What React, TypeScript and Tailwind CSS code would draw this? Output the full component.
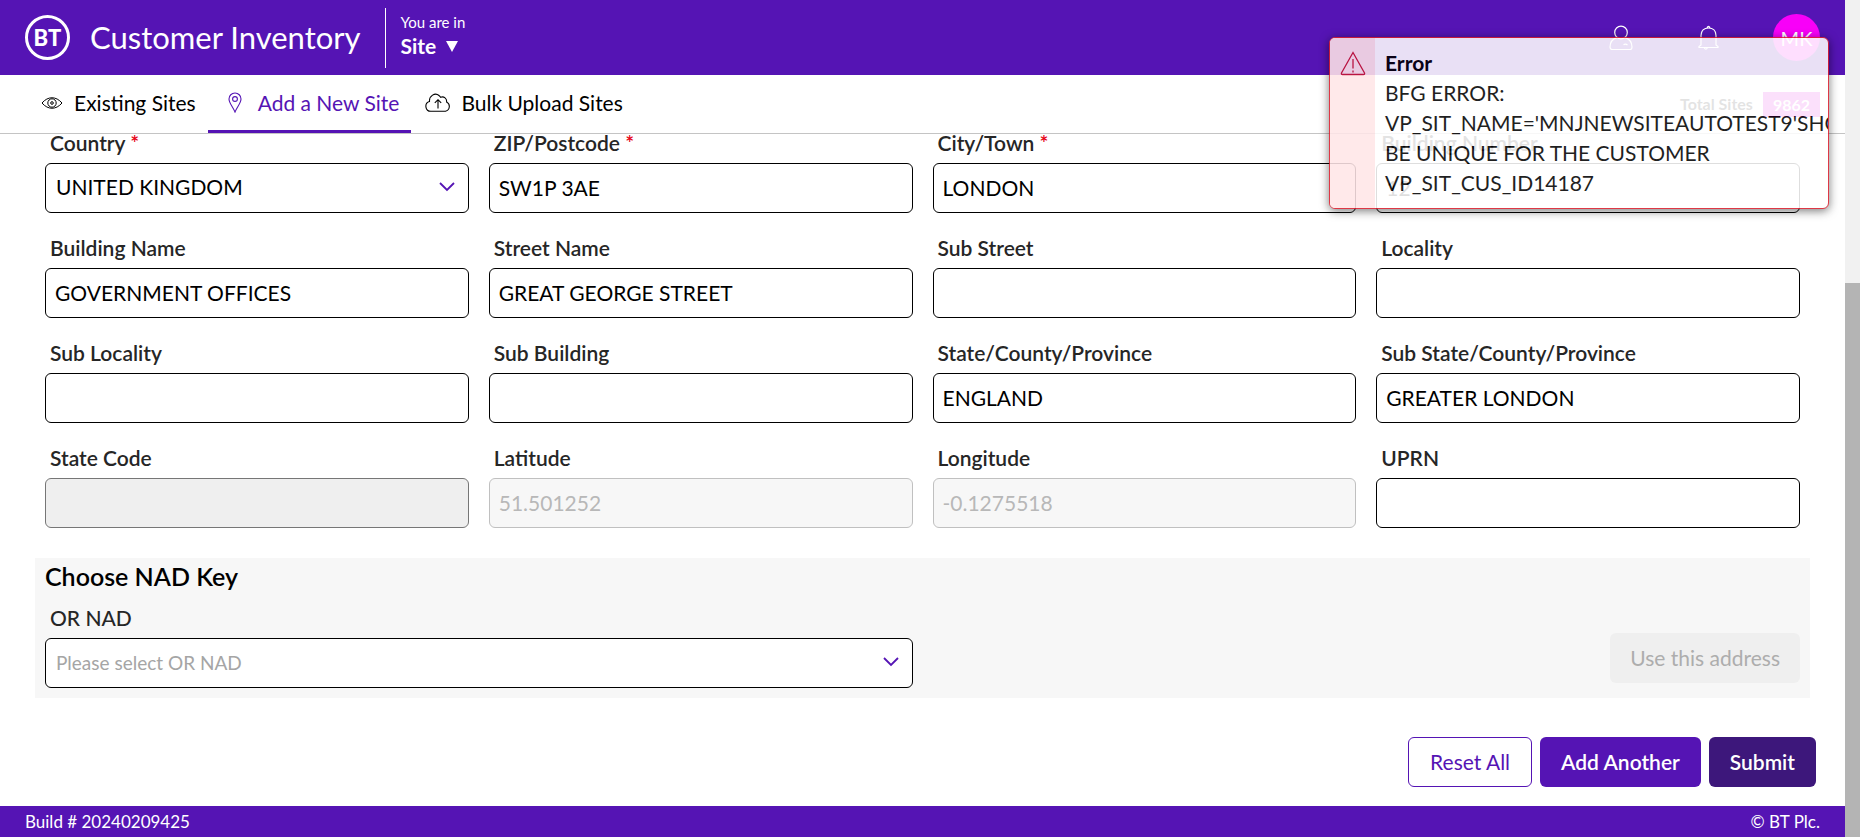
import React, { useId } from "react";

type FieldProps = {
  label: string;
  value?: string;
  required?: boolean;
  kind?: "text" | "select";
  tone?: "normal" | "locked" | "muted";
};

const tones = {
  normal: "border-black bg-white text-black",
  locked: "border-[#767676] bg-[#efefef] text-black",
  muted: "border-[#c0c0c0] bg-[#f7f7f7] text-[#b8b8b8]",
};

const fields: FieldProps[] = [
  { label: "Country", value: "UNITED KINGDOM", required: true, kind: "select" },
  { label: "ZIP/Postcode", value: "SW1P 3AE", required: true },
  { label: "City/Town", value: "LONDON", required: true },
  { label: "Building Number", value: "12" },
  { label: "Building Name", value: "GOVERNMENT OFFICES" },
  { label: "Street Name", value: "GREAT GEORGE STREET" },
  { label: "Sub Street" },
  { label: "Locality" },
  { label: "Sub Locality" },
  { label: "Sub Building" },
  { label: "State/County/Province", value: "ENGLAND" },
  { label: "Sub State/County/Province", value: "GREATER LONDON" },
  { label: "State Code", tone: "locked" },
  { label: "Latitude", value: "51.501252", tone: "muted" },
  { label: "Longitude", value: "-0.1275518", tone: "muted" },
  { label: "UPRN" },
];

function Chevron() {
  return (
    <svg viewBox="0 0 16 10" className="pointer-events-none absolute top-[19px] right-3.5 h-2.5 w-4" fill="none" stroke="#5514b4" strokeWidth="1.8">
      <path d="M1 1 8 8 15 1" />
    </svg>
  );
}

function SelectBox({ id, text, placeholder }: { id: string; text: string; placeholder?: boolean }) {
  return (
    <div className="relative">
      <select
        id={id}
        className={`h-[50px] w-full appearance-none rounded-md border border-black bg-white px-2.5 outline-none ${
          placeholder ? "text-[19px] text-[#a5a5a5]" : "pb-0.5 text-[21px] text-black"
        }`}
      >
        <option>{text}</option>
      </select>
      <Chevron />
    </div>
  );
}

function Field({ label, value = "", required, kind = "text", tone = "normal" }: FieldProps) {
  const id = useId();
  return (
    <div className="flex min-w-0 flex-col gap-3">
      <label htmlFor={id} className="pl-[5px] text-[21px] leading-[17px] font-semibold text-[#262626]">
        {label}
        {required && <span className="text-[#e60014]"> *</span>}
      </label>
      {kind === "select" ? (
        <SelectBox id={id} text={value} />
      ) : (
        <input
          id={id}
          type="text"
          defaultValue={value}
          disabled={tone !== "normal"}
          className={`h-[50px] w-full rounded-md border px-[9px] pb-0.5 text-[21px] outline-none ${tones[tone]}`}
        />
      )}
    </div>
  );
}

function Header() {
  return (
    <header className="flex h-[75px] items-center bg-[#5514b4] px-[25px] text-white">
      <div className="flex size-[45px] items-center justify-center rounded-full border-[3px] border-white text-[22px] font-black">BT</div>
      <h1 className="ml-5 text-[31px] font-normal">Customer Inventory</h1>
      <div className="ml-6 flex h-[60px] flex-col justify-center border-l border-white pb-[7px] pl-[15px]">
        <span className="text-[15px] leading-6">You are in</span>
        <button type="button" className="flex items-center gap-2.5 text-[21px] leading-6 font-bold">
          Site
          <svg viewBox="0 0 12 11" className="h-[11px] w-3" fill="currentColor">
            <path d="M0 0H12L6 11Z" />
          </svg>
        </button>
      </div>
      <div className="ml-auto flex items-center">
        <button type="button" aria-label="Profile">
          <svg viewBox="0 0 24 26" className="h-[26px] w-6" fill="none" stroke="currentColor" strokeWidth="1.2">
            <circle cx="12" cy="7.500" r="6.300" />
            <path d="M8 12.600C3.600 14 1 17.500 1 22Q1 24.500 3.500 24.500H21Q23 24.500 23 22C23 17.500 20.400 14 16 12.600M14.500 19.800Q16.500 18.500 18.500 20" />
          </svg>
        </button>
        <button type="button" aria-label="Notifications" className="ml-[65px]">
          <svg viewBox="0 0 21 26" className="h-[26px] w-[21px]" fill="none" stroke="currentColor" strokeWidth="1.2">
            <path d="M9 2.600Q10.500 0 12 2.600M3 20V10.500C3 5.500 6 3 10.500 3S18 5.500 18 10.500V20L20 21.500V22.500H1V21.500ZM6 22.500Q8 26 9.500 22.500" />
          </svg>
        </button>
        <div className="ml-[54px] flex size-[47px] items-center justify-center rounded-full bg-[#f800f8] text-xl">MK</div>
      </div>
    </header>
  );
}

function Nav() {
  return (
    <nav className="flex h-[59px] border-b border-[#c4c4c4] pl-[27px] pr-[25px] text-[21px] text-black">
      <a href="#existing" className="flex items-center gap-[11px] pr-3 pb-[3px] pl-3.5">
        <svg viewBox="0 0 22 12" className="h-3 w-[22px]" fill="none" stroke="currentColor" strokeWidth="1">
          <path d="M1 6C7-1 15-1 21 6C15 13 7 13 1 6Z" />
          <circle cx="11" cy="6" r="4.200" />
          <circle cx="11" cy="6" r="1.300" />
        </svg>
        Existing Sites
      </a>
      <a href="#add" className="flex items-center gap-4 border-b-[3px] border-[#5514b4] pr-3 pl-5 text-[#5514b4]">
        <svg viewBox="0 0 14 21" className="h-[21px] w-3.5" fill="none" stroke="currentColor" strokeWidth="1.1">
          <path d="M7 20C5 15 1 11 1 7A6 6 0 0 1 13 7C13 11 9 15 7 20Z" />
          <circle cx="7" cy="7" r="2.400" />
        </svg>
        Add a New Site
      </a>
      <a href="#bulk" className="flex items-center gap-2.5 px-3.5 pb-[3px]">
        <svg viewBox="0 0 26 19" className="h-[19px] w-[26px]" fill="none" stroke="currentColor" strokeWidth="1.1">
          <path d="M6 18.300A5 5 0 0 1 4.500 8.500C4 3 10-1 14 2.500Q15 3.200 15.600 4.300C19 3 22 5.500 21.600 9A5 5 0 0 1 20.500 18.300ZM13 15.500V7M9.800 9.900 13 6.700 16.200 9.900" />
        </svg>
        Bulk Upload Sites
      </a>
      <div className="ml-auto flex items-center gap-2.5 text-base font-bold text-[#262626]">
        Total Sites
        <span className="bg-[#e60fe6] px-2.5 leading-[25px] text-white">9862</span>
      </div>
    </nav>
  );
}

function ErrorToast() {
  return (
    <div role="alert" className="absolute top-[37px] right-4 flex h-[172px] w-[500px] overflow-hidden rounded-md border border-[#da1b2b] bg-white text-[21px] leading-[30px] text-black opacity-[0.87] shadow-[0_2px_10px_rgba(0,0,0,0.6)]">
      <div className="w-[45px] shrink-0 bg-[#ffe6e8] pt-[13px] pl-2.5">
        <svg viewBox="0 0 26 25" className="h-[25px] w-[26px]" fill="none" stroke="#c81432" strokeWidth="1.300">
          <path d="M13 1.500 24.500 22Q25 23.500 23.500 23.500H2.500Q1 23.500 1.500 22ZM13 8V17.500M13 19.500V21.500" />
        </svg>
      </div>
      <div className="pt-2.5 pl-2.5">
        <strong className="block font-bold">Error</strong>
        <p className="w-[380px]">BFG ERROR: VP_SIT_NAME='MNJNEWSITEAUTOTEST9'SHOULD BE UNIQUE FOR THE CUSTOMER VP_SIT_CUS_ID14187</p>
      </div>
    </div>
  );
}

export default function App() {
  return (
    <div className="flex min-h-screen bg-white font-['Lato',sans-serif]">
      <div className="relative flex min-w-0 flex-1 flex-col">
        <Header />
        <Nav />
        <main className="pl-[35px] pr-[29px]">
          <form onSubmit={(e) => e.preventDefault()}>
            <div className="mr-1.5 grid grid-cols-4 gap-x-5 gap-y-[26px] px-2.5">
              {fields.map((f) => (
                <Field key={f.label} {...f} />
              ))}
            </div>
            <section className="mt-[30px] mr-1.5 bg-[#f7f7f7] px-2.5 pb-2.5">
              <h2 className="pt-0.5 text-[25px] leading-8 font-semibold text-black">Choose NAD Key</h2>
              <div className="grid grid-cols-2 items-end gap-x-5 pt-[17px]">
                <div className="flex flex-col gap-3">
                  <label htmlFor="nad" className="pl-[5px] text-[21px] leading-[17px] font-medium text-[#262626]">OR NAD</label>
                  <SelectBox id="nad" text="Please select OR NAD" placeholder />
                </div>
                <button type="button" disabled className="mb-[5px] h-[50px] justify-self-end rounded-md bg-[#efefef] px-5 text-[21px] text-[#adadad]">
                  Use this address
                </button>
              </div>
            </section>
            <div className="mt-[39px] mb-[19px] flex justify-end gap-2">
              <button type="reset" className="h-[50px] rounded-md border border-[#5514b4] bg-white px-[21px] text-[21px] text-[#5514b4]">Reset All</button>
              <button type="button" className="h-[50px] rounded-md bg-[#5514b4] px-[21px] text-[21px] font-semibold text-white">Add Another</button>
              <button type="submit" className="h-[50px] rounded-md bg-[#3d177b] px-[21px] text-[21px] font-semibold text-white">Submit</button>
            </div>
          </form>
        </main>
        <footer className="mt-auto flex h-[31px] items-center justify-between bg-[#5514b4] px-[25px] text-[17px] text-white">
          <span>Build # 20240209425</span>
          <span>© BT Plc.</span>
        </footer>
        <ErrorToast />
      </div>
      <div aria-hidden="true" className="flex w-[15px] shrink-0 flex-col bg-[#f1f1f1] pt-[283px]">
        <div className="flex-1 bg-[#b4b4b4]" />
      </div>
    </div>
  );
}
